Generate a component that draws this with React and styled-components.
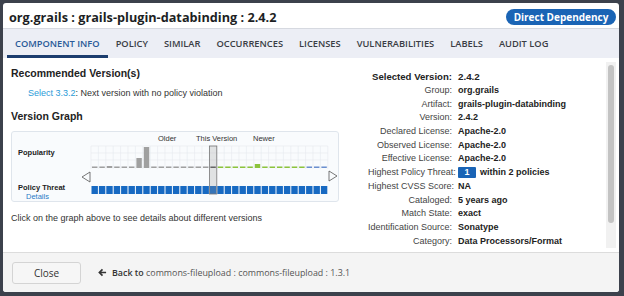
import React from "react";
import styled, { createGlobalStyle } from "styled-components";

const Global = createGlobalStyle`
  html, body { margin: 0; padding: 0; }
  body { background: #3c414c; width: 624px; height: 296px; overflow: hidden; font-family: "Liberation Sans", Arial, sans-serif; }
  #root { padding: 3px 5px 4px 3px; box-sizing: border-box; width: 624px; height: 296px; }
`;

const Modal = styled.div`
  width: 616px;
  height: 289px;
  background: #fff;
  border-radius: 3px;
  display: flex;
  flex-direction: column;
  overflow: hidden;
`;

const Header = styled.div`
  height: 25px;
  display: flex;
  align-items: center;
  justify-content: space-between;
  padding: 0 3px 0 6px;
`;

const Title = styled.h1`
  margin: 0;
  font-family: "Open Sans", sans-serif;
  font-weight: 700;
  font-size: 12.7px;
  color: #1d1f24;
  padding-top: 2px;
`;

const Badge = styled.div`
  background: #1a64b5;
  color: #fff;
  font-family: "Open Sans", sans-serif;
  font-weight: 700;
  font-size: 10px;
  height: 16px;
  width: 110px;
  border-radius: 8px;
  display: flex;
  align-items: center;
  justify-content: center;
  margin-top: 2px;
`;

const Tabs = styled.div`
  height: 30px;
  background: #eceef5;
  border-top: 1px solid #d6d9e0;
  display: flex;
  padding-left: 4px;
  box-sizing: border-box;
`;

const Tab = styled.div`
  font-family: "Open Sans", sans-serif;
  font-weight: 600;
  font-size: 9.3px;
  color: ${p => (p.$active ? "#2a5a98" : "#3a3d44")};
  padding: 0 8px;
  display: flex;
  align-items: center;
  border-bottom: 3px solid ${p => (p.$active ? "#1c3d6e" : "transparent")};
  padding-top: 3px;
  box-sizing: border-box;
  white-space: nowrap;
`;

const Body = styled.div`
  flex: 1;
  display: flex;
  position: relative;
  min-height: 0;
`;

const LeftCol = styled.div`
  width: 336px;
  padding: 9px 0 0 8px;
  box-sizing: content-box;
`;

const SectionTitle = styled.div`
  font-weight: 700;
  font-size: 10.5px;
  color: #222;
`;

const RecLine = styled.div`
  font-size: 9px;
  color: #333;
  padding-left: 17px;
  margin: 9px 0 12px;
`;

const Link = styled.span`
  color: #2b9bd8;
`;

const GraphBox = styled.div`
  width: 326px;
  height: 69px;
  border: 1px solid #dfe5ec;
  border-radius: 3px;
  background: #f9fbfd;
  display: flex;
  margin-top: 9px;
`;

const GraphLabels = styled.div`
  width: 64px;
  padding-left: 6px;
  box-sizing: border-box;
  display: flex;
  flex-direction: column;
`;

const GLabel = styled.div`
  font-size: 7.5px;
  font-weight: 700;
  color: #222;
  margin-top: ${p => p.$mt}px;
`;

const GLink = styled.div`
  font-size: 7.5px;
  color: #2a7cc7;
  padding-left: 8px;
`;

const Hint = styled.div`
  font-size: 9px;
  color: #333;
  margin-top: 11px;
`;

const RightCol = styled.div`
  flex: 1;
  padding-top: 11px;
  padding-left: 21px;
`;

const InfoGrid = styled.div`
  display: grid;
  grid-template-columns: 84px 1fr;
  column-gap: 6px;
  font-size: 9px;
  color: #444;
  align-items: center;
`;

const Label = styled.div`
  text-align: right;
  white-space: nowrap;
  height: 13.7px;
  line-height: 13.7px;
  ${p => p.$head && `font-weight: 700; font-size: 9.6px; color: #222; height: 15px; line-height: 15px;`}
`;

const Value = styled.div`
  font-weight: 700;
  color: #222;
  white-space: nowrap;
  height: 13.7px;
  line-height: 13.7px;
  display: flex;
  align-items: center;
  gap: 4px;
  ${p => p.$head && `font-size: 9.8px; height: 15px; line-height: 15px;`}
`;

const Threat = styled.span`
  background: #1a64b5;
  color: #fff;
  width: 18px;
  height: 11px;
  line-height: 11px;
  text-align: center;
  font-size: 9px;
  border-radius: 1px;
`;

const Scroll = styled.div`
  width: 10px;
  margin: 4px 3px 4px 0;
  background: #f1f1f1;
  display: flex;
  justify-content: center;
  padding-top: 3px;
  box-sizing: border-box;
`;

const Thumb = styled.div`
  width: 6px;
  height: 158px;
  background: #c3c3c3;
  border-radius: 3px;
`;

const Footer = styled.div`
  height: 40px;
  background: #f4f4f4;
  border-top: 1px solid #dcdcdc;
  display: flex;
  align-items: center;
  padding-left: 9px;
  gap: 17px;
  box-sizing: border-box;
`;

const CloseBtn = styled.button`
  width: 69px;
  height: 22px;
  border: 1px solid #d4d4d4;
  border-radius: 3px;
  background: #f6f6f6;
  font-family: "Open Sans", sans-serif;
  font-size: 10px;
  color: #333;
  padding: 0;
`;

const Back = styled.div`
  font-family: "Open Sans", sans-serif;
  font-size: 8.9px;
  color: #555;
  display: flex;
  align-items: center;
  gap: 5px;
  b { font-weight: 600; color: #333; }
`;

const Graph = () => {
  const x0 = 15;
  const n = 32;
  const w = 7.4;
  const sel = 16;
  const bars = { 2: 2, 6: 10, 7: 21, 22: 4, 25: 1.5 };
  const cells = [];
  for (let i = 0; i < n; i++) {
    const x = x0 + i * w;
    const color = i < sel ? "#a0a0a0" : i === sel ? "#555" : i < 29 ? "#8cc43c" : "#6b8fcf";
    const h = bars[i] || 1.5;
    cells.push(<rect key={"b" + i} x={x + 1} y={36 - h} width={w - 2} height={h} fill={color} />);
    cells.push(<rect key={"p" + i} x={x + 0.5} y={54} width={w - 1} height={8} fill="#1769c2" />);
  }
  const grid = [];
  for (let i = 0; i <= n; i++) {
    grid.push(<line key={"v" + i} x1={x0 + i * w} x2={x0 + i * w} y1={14} y2={37} stroke="#e6e9ee" strokeWidth="0.6" />);
  }
  for (let j = 0; j < 4; j++) {
    grid.push(<line key={"h" + j} x1={x0} x2={x0 + n * w} y1={14 + j * 7} y2={14 + j * 7} stroke="#e6e9ee" strokeWidth="0.6" />);
  }
  const sx = x0 + sel * w;
  return (
    <svg width="262" height="69" viewBox="0 0 262 69" style={{ display: "block" }}>
      {grid}
      {cells}
      <rect x={sx} y={14} width={w} height={48} fill="rgba(150,150,150,0.25)" stroke="#777" strokeWidth="0.8" />
      <polygon points="6,45 14,40 14,50" fill="none" stroke="#555" strokeWidth="0.8" />
      <polygon points="261,44 253,39 253,49" fill="none" stroke="#555" strokeWidth="0.8" />
      <text x="82" y="9" fontSize="7.5" fill="#333" fontFamily="Liberation Sans, Arial, sans-serif">Older</text>
      <text x="120" y="9" fontSize="7.5" fill="#333" fontFamily="Liberation Sans, Arial, sans-serif">This Version</text>
      <text x="177" y="9" fontSize="7.5" fill="#333" fontFamily="Liberation Sans, Arial, sans-serif">Newer</text>
    </svg>
  );
};

const rows = [
  ["Group:", "org.grails"],
  ["Artifact:", "grails-plugin-databinding"],
  ["Version:", "2.4.2"],
  ["Declared License:", "Apache-2.0"],
  ["Observed License:", "Apache-2.0"],
  ["Effective License:", "Apache-2.0"],
  ["Highest Policy Threat:", "threat"],
  ["Highest CVSS Score:", "NA"],
  ["Cataloged:", "5 years ago"],
  ["Match State:", "exact"],
  ["Identification Source:", "Sonatype"],
  ["Category:", "Data Processors/Format"],
];

const tabs = ["COMPONENT INFO", "POLICY", "SIMILAR", "OCCURRENCES", "LICENSES", "VULNERABILITIES", "LABELS", "AUDIT LOG"];

export default function App() {
  return (
    <>
      <Global />
      <Modal>
        <Header>
          <Title>org.grails : grails-plugin-databinding : 2.4.2</Title>
          <Badge>Direct Dependency</Badge>
        </Header>
        <Tabs>
          {tabs.map((t, i) => (
            <Tab key={t} $active={i === 0}>{t}</Tab>
          ))}
        </Tabs>
        <Body>
          <LeftCol>
            <SectionTitle>Recommended Version(s)</SectionTitle>
            <RecLine>
              <Link>Select 3.3.2</Link>: Next version with no policy violation
            </RecLine>
            <SectionTitle>Version Graph</SectionTitle>
            <GraphBox>
              <GraphLabels>
                <GLabel $mt={16}>Popularity</GLabel>
                <GLabel $mt={26}>Policy Threat</GLabel>
                <GLink>Details</GLink>
              </GraphLabels>
              <Graph />
            </GraphBox>
            <Hint>Click on the graph above to see details about different versions</Hint>
          </LeftCol>
          <RightCol>
            <InfoGrid>
              <Label $head>Selected Version:</Label>
              <Value $head>2.4.2</Value>
              {rows.map(([l, v]) => (
                <React.Fragment key={l}>
                  <Label>{l}</Label>
                  <Value>
                    {v === "threat" ? (<><Threat>1</Threat>within 2 policies</>) : v}
                  </Value>
                </React.Fragment>
              ))}
            </InfoGrid>
          </RightCol>
          <Scroll><Thumb /></Scroll>
        </Body>
        <Footer>
          <CloseBtn>Close</CloseBtn>
          <Back>
            <svg width="9" height="9" viewBox="0 0 10 10">
              <path d="M9 5H2M5 1.5L1.5 5L5 8.5" stroke="#333" strokeWidth="1.8" fill="none" />
            </svg>
            <span><b>Back to</b> commons-fileupload : commons-fileupload : 1.3.1</span>
          </Back>
        </Footer>
      </Modal>
    </>
  );
}
